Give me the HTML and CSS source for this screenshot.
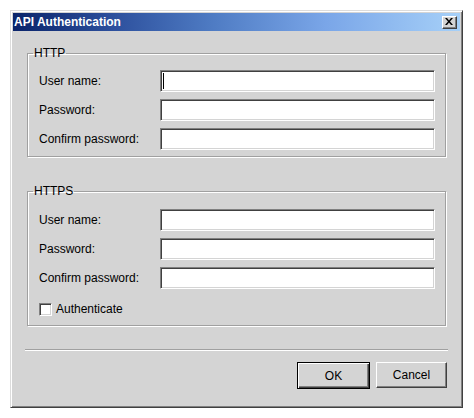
FILE: index.html
```html
<!DOCTYPE html>
<html>
<head>
<meta charset="utf-8">
<link rel="stylesheet" href="styles.css">
</head>
<body>
<div class="win">
  <div class="titlebar">
    <span class="title">API Authentication</span>
    <span class="close"><svg width="8" height="7" viewBox="0 0 8 7"><path d="M0 0h2l2 2.5L6 0h2L5 3.5 8 7H6L4 4.5 2 7H0l3-3.5z" fill="#000"/></svg></span>
  </div>
  <div class="content">
    <fieldset class="group http">
      <legend>HTTP</legend>
      <div class="grid">
        <label>User name:</label><div class="field"><span class="caret"></span></div>
        <label>Password:</label><div class="field"></div>
        <label>Confirm password:</label><div class="field"></div>
      </div>
    </fieldset>
    <fieldset class="group https">
      <legend>HTTPS</legend>
      <div class="grid">
        <label>User name:</label><div class="field"></div>
        <label>Password:</label><div class="field"></div>
        <label>Confirm password:</label><div class="field"></div>
      </div>
      <div class="check"><span class="box"></span><span>Authenticate</span></div>
    </fieldset>
    <div class="sep"></div>
    <div class="buttons">
      <div class="btn default"><span>OK</span></div>
      <div class="btn"><span>Cancel</span></div>
    </div>
  </div>
</div>
</body>
</html>
```

FILE: styles.css
```css
* { box-sizing: border-box; }
html, body { margin: 0; padding: 0; background: #fff; }
body {
  font-family: "Liberation Sans", Arial, sans-serif;
  font-size: 12px;
  color: #000;
}
.win {
  width: 453px;
  height: 398px;
  margin: 10px 0 0 10px;
  background: #d4d4d4;
  border: 1px solid;
  border-color: #dcdcdc #404040 #404040 #dcdcdc;
  box-shadow: inset 1px 1px #fff, inset -1px -1px #808080;
  padding: 2px;
  display: flex;
  flex-direction: column;
}
.titlebar {
  height: 18px;
  background: linear-gradient(to right, #0a246a 0%, #2c4f9c 22%, #4f7cc4 45%, #7aa6e8 70%, #a6d0f8 100%);
  display: flex;
  align-items: center;
  justify-content: space-between;
  padding: 0 3px 0 1px;
}
.title {
  color: #fff;
  font-weight: bold;
  font-size: 12px;
  line-height: 18px;
}
.close {
  width: 15px;
  height: 13px;
  background: #d4d4d4;
  border: 1px solid;
  border-color: #fff #404040 #404040 #fff;
  box-shadow: inset -1px -1px #808080;
  display: flex;
  align-items: center;
  justify-content: center;
  padding: 0 1px 1px 0;
}
.close svg { display: block; }
.content {
  flex: 1;
  display: flex;
  flex-direction: column;
}
.group {
  margin: 0;
  border: 1px solid #a0a0a0;
  box-shadow: inset 1px 1px #fff, 1px 1px #fff;
  width: 419px;
  margin-left: 14px;
  padding: 10px 10px 6px 11px;
}
.group legend {
  padding: 0 1px;
  margin-left: -6px;
  line-height: 14px;
  font-size: 12px;
}
.http { margin-top: 15px; }
.https { margin-top: 27px; padding-top: 11px; padding-bottom: 9px; }
.grid {
  display: grid;
  grid-template-columns: 121px 275px;
  row-gap: 7px;
  align-items: center;
}
.grid label { line-height: 14px; }
.field {
  height: 22px;
  background: #fff;
  border: 1px solid;
  border-color: #808080 #fff #fff #808080;
  box-shadow: inset 1px 1px #404040, inset -1px -1px #d4d4d4;
  position: relative;
}
.caret {
  position: absolute;
  left: 2px;
  top: 2px;
  width: 1px;
  height: 16px;
  background: #000;
}
.check {
  display: flex;
  align-items: center;
  margin-top: 13px;
  gap: 4px;
  line-height: 14px;
}
.box {
  width: 13px;
  height: 13px;
  background: #fff;
  border: 1px solid;
  border-color: #808080 #fff #fff #808080;
  box-shadow: inset 1px 1px #404040, inset -1px -1px #d4d4d4;
}
.sep {
  margin: 23px 12px 0 12px;
  height: 2px;
  border-top: 1px solid #a0a0a0;
  border-bottom: 1px solid #fff;
}
.buttons {
  display: flex;
  justify-content: flex-end;
  gap: 6px;
  margin-top: 11px;
  padding-right: 13px;
}
.btn {
  width: 71px;
  height: 26px;
  border: 1px solid;
  border-color: #fff #404040 #404040 #fff;
  box-shadow: inset -1px -1px #808080;
  display: flex;
  align-items: center;
  justify-content: center;
  line-height: 14px;
}
.btn.default {
  width: 73px;
  height: 27px;
  border: 1px solid #000;
  box-shadow: inset 1px 1px #fff, inset -1px -1px #404040, inset -2px -2px #808080;
}
```
